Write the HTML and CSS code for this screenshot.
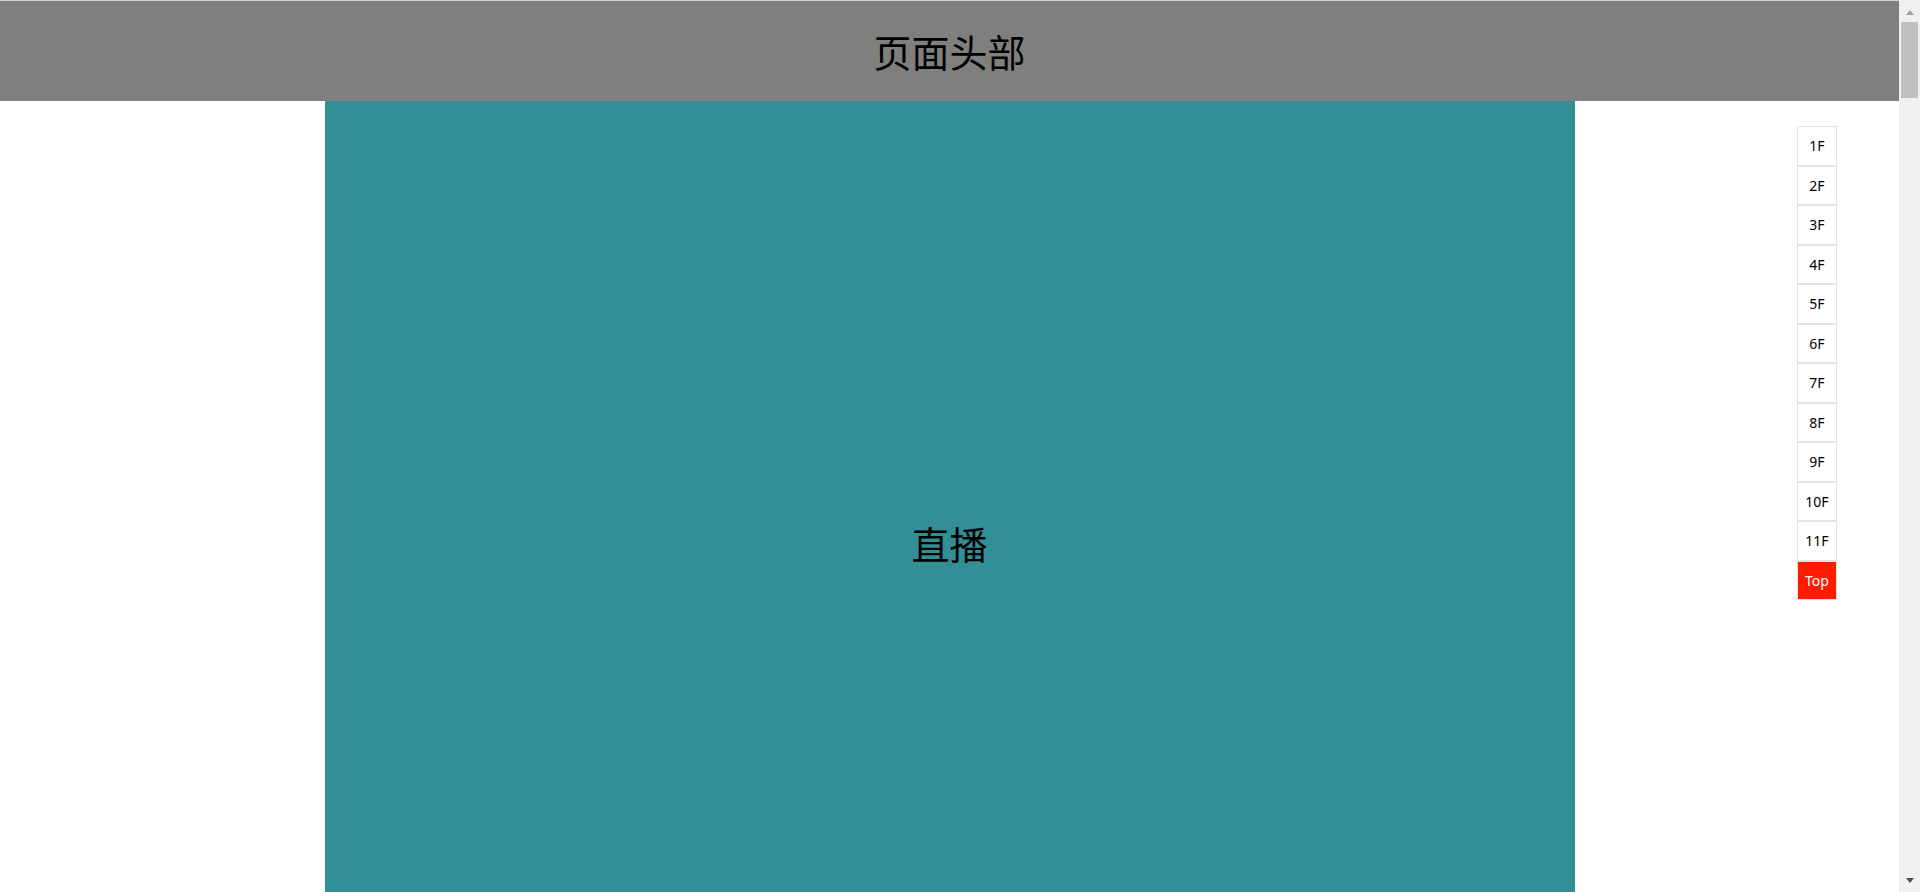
FILE: index.html
```html
<!DOCTYPE html>
<html lang="zh-CN">
<head>
<meta charset="utf-8">
<title>楼层导航</title>
<link rel="stylesheet" href="styles.css">
</head>
<body>
<div class="page">
  <header class="header">页面头部</header>
  <main class="floors">
    <section class="floor live">直播</section>
  </main>
</div>
<aside class="scrollbar">
  <div class="arrow up"></div>
  <div class="track"><div class="thumb"></div></div>
  <div class="arrow down"></div>
</aside>
<nav class="elevator">
  <ul>
    <li>1F</li>
    <li>2F</li>
    <li>3F</li>
    <li>4F</li>
    <li>5F</li>
    <li>6F</li>
    <li>7F</li>
    <li>8F</li>
    <li>9F</li>
    <li>10F</li>
    <li>11F</li>
    <li class="top">Top</li>
  </ul>
</nav>
</body>
</html>
```
FILE: styles.css
```css
html, body {
  margin: 0;
  padding: 0;
  height: 892px;
  overflow: hidden;
}
body {
  display: flex;
  font-family: "Noto Sans", "Noto Sans CJK SC", sans-serif;
  background: #fff;
}
.page {
  flex: 1;
  border-top: 1px solid #d4d4d4;
  overflow: hidden;
}
.header {
  height: 100px;
  background: #7f7f7d;
  color: #000;
  text-align: center;
  line-height: 100px;
  font-size: 38px;
  font-family: "Noto Sans CJK SC", sans-serif;
}
.floors {
  display: block;
}
.floor {
  width: 1250px;
  margin: 0 auto;
  height: 890px;
  line-height: 884px;
  text-align: center;
  font-size: 38px;
  font-family: "Noto Sans CJK SC", sans-serif;
  color: #000;
}
.live {
  background: #328f96;
}
.scrollbar {
  width: 21px;
  background: #f0f0f0;
  display: flex;
  flex-direction: column;
  align-items: center;
}
.arrow {
  width: 0;
  height: 0;
  border-left: 4.5px solid transparent;
  border-right: 4.5px solid transparent;
}
.arrow.up {
  margin-top: 10px;
  border-bottom: 5px solid #a3a3a3;
}
.arrow.down {
  margin-bottom: 9px;
  border-top: 5px solid #505050;
}
.track {
  flex: 1;
  align-self: stretch;
  display: flex;
  justify-content: center;
}
.thumb {
  margin-top: 7px;
  width: 17px;
  height: 76px;
  background: #c1c1c1;
}
.elevator {
  position: fixed;
  top: 126px;
  right: 83px;
}
.elevator ul {
  list-style: none;
  margin: 0;
  padding: 0;
}
.elevator li {
  width: 38px;
  height: 37.5px;
  line-height: 37.5px;
  border: 1px solid #e3e3e3;
  text-align: center;
  font-size: 14px;
  color: #000;
  background: #fff;
}
.elevator li.top {
  background: #ff1a00;
  color: #fff;
}
```
